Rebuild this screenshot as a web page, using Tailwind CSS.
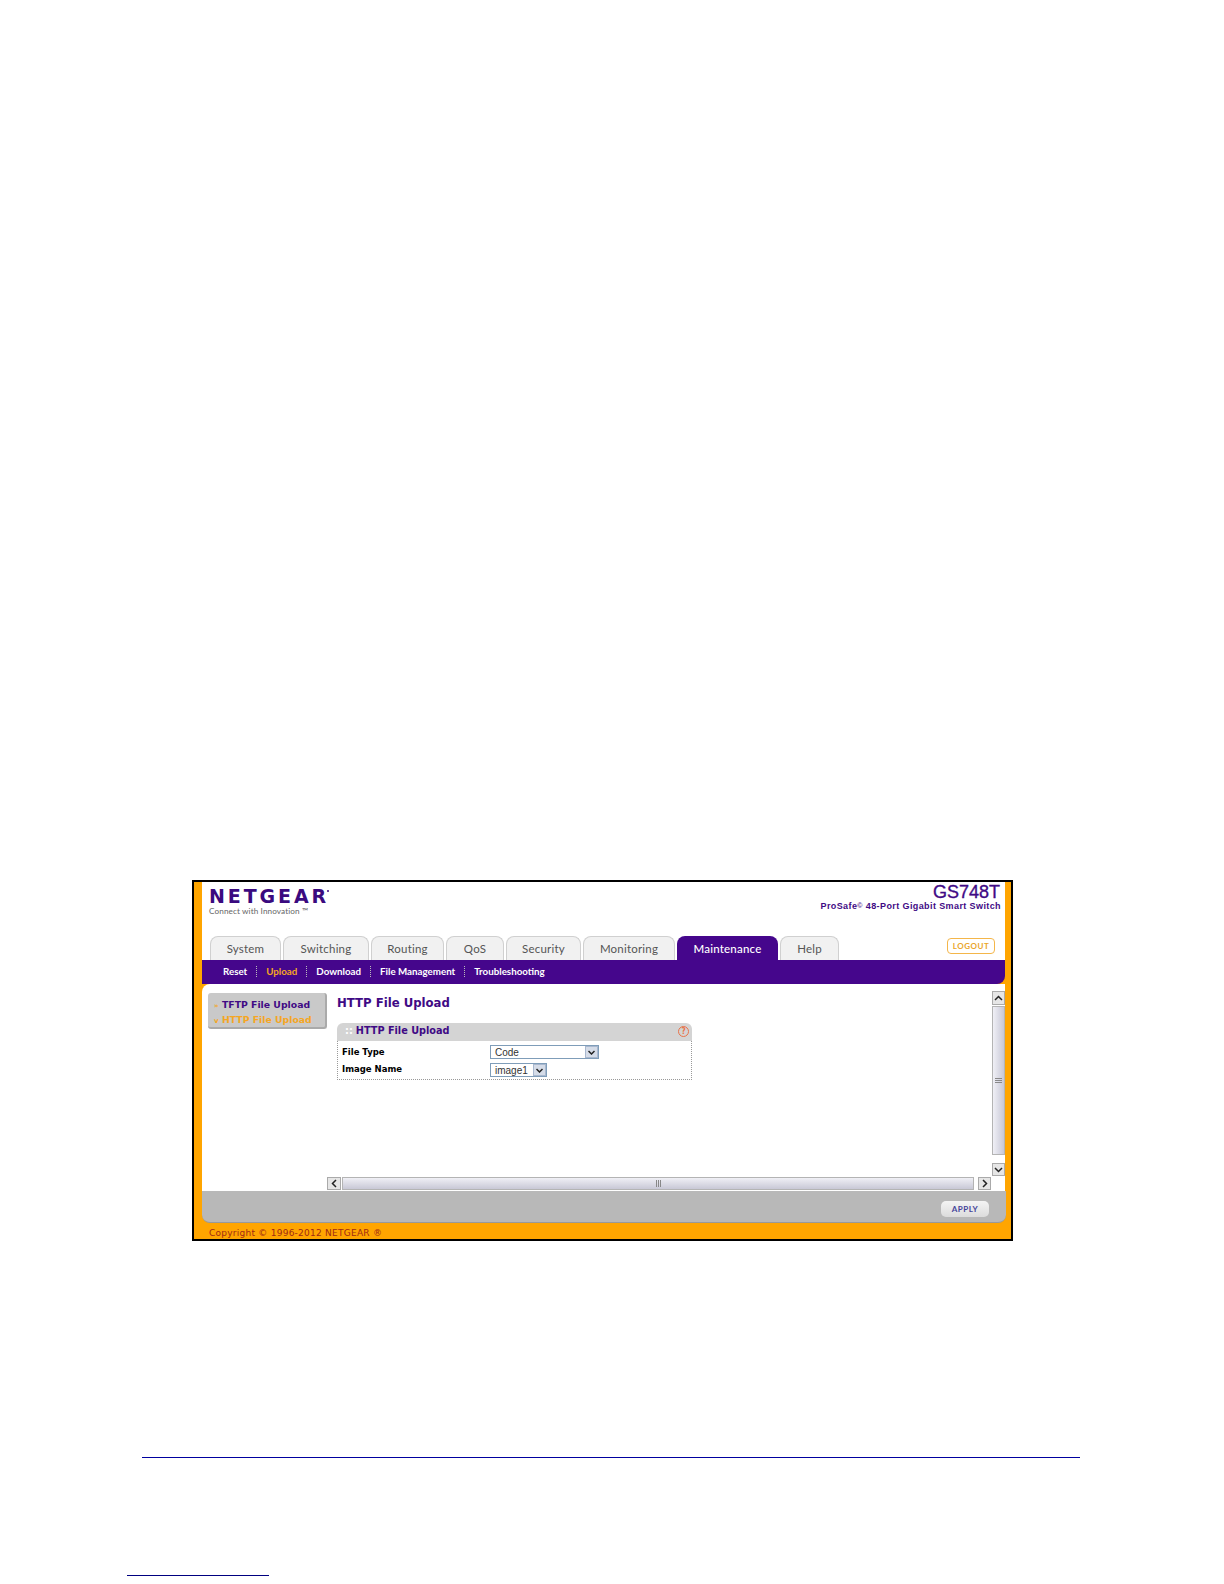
<!doctype html>
<html>
<head>
    <meta charset="UTF-8">
    <script src="https://cdn.jsdelivr.net/npm/@tailwindcss/browser@4"></script>
    <title>HTTP File Upload</title>
</head>
<body class="w-[1224px] h-[1584px] bg-white overflow-hidden font-['Liberation_Sans',sans-serif]">
    <div class="pt-[880px] pl-[192px]">
        <!-- switch UI frame -->
        <div class="w-[821px] h-[361px] border-2 border-black bg-[#ffa500] flex flex-col">

            <!-- header -->
            <div class="ml-[8px] mr-[6px] h-[78px] bg-white relative flex flex-col">
                <div class="flex justify-between h-[46px]">
                    <div class="pl-[7px] pt-[4px]">
                        <div class="text-[19px] leading-[20px] font-bold text-[#3a0a7f] tracking-[2.9px] font-['DejaVu_Sans',sans-serif] relative w-max">NETGEAR<span class="absolute right-[0px] top-[4px] w-[2px] h-[2px] rounded-full bg-[#3a0a7f]"></span></div>
                        <div class="text-[8.2px] leading-[11px] text-[#666] font-['Lato',sans-serif] tracking-[0.1px]">Connect with Innovation ™</div>
                    </div>
                    <div class="pr-[4px] pt-[1px] text-right text-[#3f0a85]">
                        <div class="pr-[1px] text-[18px] leading-[18px] [-webkit-text-stroke:0.35px_#3f0a85]">GS748T</div>
                        <div class="text-[9px] leading-[10px] font-bold tracking-[0.4px]">ProSafe<span class="text-[7px] align-top">©</span> 48-Port Gigabit Smart Switch</div>
                    </div>
                </div>
                <div class="flex items-end h-[32px] pl-[8px] gap-[2px] font-['Lato',sans-serif] text-[11.5px] tracking-[0.2px] text-[#555]">
                    <div class="w-[71px] h-[24px] flex items-center justify-center rounded-t-[8px] bg-[#f1f1f1] border border-b-0 border-[#d0d0d0]">System</div>
                    <div class="w-[86px] h-[24px] flex items-center justify-center rounded-t-[8px] bg-[#f1f1f1] border border-b-0 border-[#d0d0d0]">Switching</div>
                    <div class="w-[73px] h-[24px] flex items-center justify-center rounded-t-[8px] bg-[#f1f1f1] border border-b-0 border-[#d0d0d0]">Routing</div>
                    <div class="w-[58px] h-[24px] flex items-center justify-center rounded-t-[8px] bg-[#f1f1f1] border border-b-0 border-[#d0d0d0]">QoS</div>
                    <div class="w-[75px] h-[24px] flex items-center justify-center rounded-t-[8px] bg-[#f1f1f1] border border-b-0 border-[#d0d0d0]">Security</div>
                    <div class="w-[92px] h-[24px] flex items-center justify-center rounded-t-[8px] bg-[#f1f1f1] border border-b-0 border-[#d0d0d0]">Monitoring</div>
                    <div class="w-[101px] h-[24px] pt-[1px] flex items-center justify-center rounded-t-[8px] bg-[#45068c] text-white font-medium">Maintenance</div>
                    <div class="w-[59px] h-[24px] flex items-center justify-center rounded-t-[8px] bg-[#f1f1f1] border border-b-0 border-[#d0d0d0]">Help</div>
                </div>
                <div class="absolute right-[10px] top-[56px] w-[48px] h-[16px] rounded-[4px] border border-[#f4b64a] flex items-center justify-center text-[8px] font-bold tracking-[0.5px] text-[#eaa52a] font-['Lato',sans-serif]">LOGOUT</div>
            </div>

            <!-- sub nav -->
            <div class="ml-[8px] mr-[6px] h-[24px] pb-[2px] bg-[#45068c] flex items-center pl-[21px] font-['Lato',sans-serif] font-bold text-[9.75px] text-white rounded-br-[8px]">
                <span>Reset</span><span class="mx-[9px] h-[11px] border-l border-dotted border-[#bbb]"></span>
                <span class="text-[#f5a623]">Upload</span><span class="mx-[9px] h-[11px] border-l border-dotted border-[#bbb]"></span>
                <span>Download</span><span class="mx-[9px] h-[11px] border-l border-dotted border-[#bbb]"></span>
                <span>File Management</span><span class="mx-[9px] h-[11px] border-l border-dotted border-[#bbb]"></span>
                <span>Troubleshooting</span>
            </div>

            <!-- content -->
            <div class="ml-[8px] mr-[6px] h-[207px] bg-white rounded-tl-[8px] flex">
                <div class="ml-[6px] mt-[9px] w-[119px] h-[36px] bg-[#c9c9c9] border-r-2 border-b-2 border-[#aaa] rounded-[3px] pl-[6px] pt-[5px] text-[9.3px] leading-[14px] font-bold font-['DejaVu_Sans',sans-serif]">
                    <div class="text-[#3f0a85]"><span class="inline-block w-[8px] text-[#f5a623] text-[7px]">»</span>TFTP File Upload</div>
                    <div class="text-[#f5a623]"><span class="inline-block w-[8px] text-[7px]">v</span>HTTP File Upload</div>
                </div>
                <div class="flex-1 flex flex-col">
                    <div class="h-[193px] flex">
                        <div class="flex-1 pl-[10px] pt-[10px]">
                            <div class="w-[355px]">
                                <div class="text-[13px] leading-[18px] font-bold text-[#3f0a85] font-['DejaVu_Sans_Condensed','DejaVu_Sans',sans-serif]">HTTP File Upload</div>
                                <div class="mt-[11px] h-[18px] pb-[1px] bg-[#d4d4d4] rounded-t-[6px] flex items-center justify-between pl-[8px] pr-[3px] text-[10.8px] font-bold text-[#3f0a85] font-['DejaVu_Sans_Condensed','DejaVu_Sans',sans-serif]">
                                    <span><span class="text-white mr-[3px]">::</span>HTTP File Upload</span>
                                    <span class="w-[11px] h-[11px] rounded-full border border-[#e8734a] text-[#e8734a] text-[8px] leading-[9px] text-center">?</span>
                                </div>
                                <div class="border border-t-0 border-dotted border-[#999] h-[39px] pl-[4px] pt-[4px] text-[8.5px] font-bold text-black font-['DejaVu_Sans',sans-serif]">
                                    <div class="flex items-center h-[14px] mb-[4px]">
                                        <span class="w-[148px]">File Type</span>
                                        <span class="w-[109px] h-[14px] border border-[#7f9db9] flex justify-between items-center pl-[4px] font-normal text-[10px] text-[#333] font-['Liberation_Sans',sans-serif]">Code
                                            <span class="w-[13px] h-[12px] bg-[#d5dce8] border border-[#a9b8cf] flex items-center justify-center">
                                                <svg width="7" height="5" viewBox="0 0 7 5"><path d="M0.5 1 L3.5 4 L6.5 1" fill="none" stroke="#222" stroke-width="1.5"/></svg>
                                            </span>
                                        </span>
                                    </div>
                                    <div class="flex items-center h-[14px]">
                                        <span class="w-[148px] pb-[2px]">Image Name</span>
                                        <span class="w-[57px] h-[14px] border border-[#7f9db9] flex justify-between items-center pl-[4px] font-normal text-[10px] text-[#333] font-['Liberation_Sans',sans-serif]">image1
                                            <span class="w-[13px] h-[12px] bg-[#d5dce8] border border-[#a9b8cf] flex items-center justify-center">
                                                <svg width="7" height="5" viewBox="0 0 7 5"><path d="M0.5 1 L3.5 4 L6.5 1" fill="none" stroke="#222" stroke-width="1.5"/></svg>
                                            </span>
                                        </span>
                                    </div>
                                </div>
                            </div>
                        </div>
                        <!-- vertical scrollbar -->
                        <div class="w-[13px] pt-[7px] flex flex-col">
                            <div class="h-[14px] bg-[#e6e6e6] border border-[#aaa] flex items-center justify-center">
                                <svg width="9" height="6" viewBox="0 0 9 6"><path d="M1 5 L4.5 1.5 L8 5" fill="none" stroke="#222" stroke-width="1.5"/></svg>
                            </div>
                            <div class="mt-[1px] h-[149px] bg-linear-to-r from-[#f0f0f6] to-[#c8c8d6] border border-[#b4b4b4] flex items-center justify-center">
                                <div class="w-[7px] h-[5px] border-y border-[#888] flex items-center"><div class="w-full h-[1px] bg-[#888]"></div></div>
                            </div>
                            <div class="mt-[8px] h-[13px] bg-[#e6e6e6] border border-[#aaa] flex items-center justify-center">
                                <svg width="9" height="6" viewBox="0 0 9 6"><path d="M1 1 L4.5 4.5 L8 1" fill="none" stroke="#222" stroke-width="1.5"/></svg>
                            </div>
                        </div>
                    </div>
                    <!-- horizontal scrollbar -->
                    <div class="h-[13px] mr-[14px] flex">
                        <div class="w-[14px] bg-[#e6e6e6] border border-[#aaa] flex items-center justify-center">
                            <svg width="6" height="9" viewBox="0 0 6 9"><path d="M5 1 L1.5 4.5 L5 8" fill="none" stroke="#222" stroke-width="1.5"/></svg>
                        </div>
                        <div class="ml-[1px] flex-1 bg-linear-to-b from-[#f0f0f6] to-[#c8c8d6] border border-[#b4b4b4] flex items-center justify-center">
                            <div class="w-[5px] h-[7px] border-x border-[#888] flex justify-center"><div class="w-[1px] h-full bg-[#888]"></div></div>
                        </div>
                        <div class="ml-[4px] w-[13px] bg-[#e6e6e6] border border-[#aaa] flex items-center justify-center">
                            <svg width="6" height="9" viewBox="0 0 6 9"><path d="M1 1 L4.5 4.5 L1 8" fill="none" stroke="#222" stroke-width="1.5"/></svg>
                        </div>
                    </div>
                </div>
            </div>

            <!-- apply bar -->
            <div class="ml-[8px] mr-[5px] h-[32px] bg-[#b8b8b8] border-b border-[#999] rounded-b-[8px] flex items-start justify-end pt-[10px] pr-[17px]">
                <div class="w-[48px] h-[16px] rounded-[5px] bg-linear-to-b from-[#f4f4f4] to-[#dcdcdc] text-[8px] text-[#44449a] text-center leading-[16px] tracking-[0.5px] font-['Lato',sans-serif] font-bold">APPLY</div>
            </div>

            <div class="ml-[8px] h-[16px] pt-[2px] text-[9px] leading-[16px] pl-[7px] text-[#a02a14] tracking-[0.25px] font-['DejaVu_Sans',sans-serif]">Copyright © 1996-2012 NETGEAR ®</div>
        </div>
    </div>
    <div class="mt-[216px] ml-[142px] w-[938px] h-[1px] bg-[#00009f]"></div>
    <div class="mt-[117px] ml-[127px] w-[142px] h-[1px] bg-[#000080]"></div>
</body>
</html>
